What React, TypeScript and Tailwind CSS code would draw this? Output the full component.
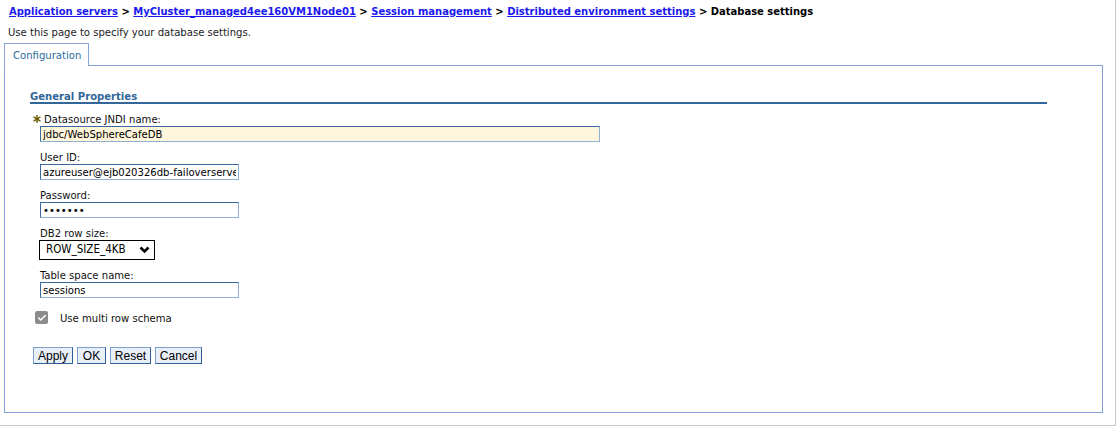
import { Check } from 'lucide-react';

const ui = "font-[family-name:'DejaVu_Sans_Condensed','Liberation_Sans',sans-serif]";

function Field({ label, children, required }: { label: string; children: React.ReactNode; required?: boolean }) {
  return (
    <div className="mt-[10px]">
      <div className={`h-[12px] leading-[12px] text-[11.2px] text-[#111] whitespace-nowrap ${required ? '-ml-[7px]' : ''}`}>
        {required && (
          <svg className="inline-block w-[8px] h-[8px] mr-[3px] align-[0px]" viewBox="0 0 8 8">
            <g stroke="#6b5a00" strokeWidth="1.4" strokeLinecap="round">
              <line x1="4" y1="0.5" x2="4" y2="7.5" />
              <line x1="1" y1="2.2" x2="7" y2="5.8" />
              <line x1="1" y1="5.8" x2="7" y2="2.2" />
            </g>
          </svg>
        )}
        {label}
      </div>
      {children}
    </div>
  );
}

const inputCls =
  'block h-[16px] px-[2px] text-[11.2px] leading-[14px] text-black border border-t-[#3a6a9e] border-l-[#3a6a9e] border-r-[#8fb0d6] border-b-[#8fb0d6] outline-none';

export default function App() {
  const crumbs = [
    'Application servers',
    'MyCluster_managed4ee160VM1Node01',
    'Session management',
    'Distributed environment settings',
  ];

  return (
    <div className={`w-[1120px] h-[437px] bg-white ${ui}`}>
      <div className="w-[1116px] h-[426px] border-r border-b border-[#c8c8c8]">
        {/* breadcrumb */}
        <div className="pl-[9px] pt-[5px] h-[18px] leading-[13px] text-[11.1px] font-bold text-black whitespace-nowrap">
          {crumbs.map((c) => (
            <span key={c}>
              <a href="#" className="text-[#1a1af0] underline">{c}</a>
              {' > '}
            </span>
          ))}
          <span>Database settings</span>
        </div>
        <div className="pl-[8px] mt-[8px] leading-[13px] text-[11.2px] text-[#222]">
          Use this page to specify your database settings.
        </div>

        {/* tab */}
        <div className="ml-[4px] mt-[4px] relative z-10 w-[85px] h-[23px] bg-white border-t border-l border-r border-[#8aa6d6] pl-[8px] pt-[5px] leading-[13px] text-[11.2px] text-[#2a6c9c]">
          Configuration
        </div>

        {/* panel */}
        <div className="ml-[4px] -mt-[1px] w-[1099px] h-[348px] border border-[#7f9fd6]">
          <div className="ml-[25px] pt-[25px] w-[1017px]">
            <div className="h-[13px] leading-[11px] text-[11.2px] font-bold text-[#336699] border-b-2 border-[#336699]">
              General Properties
            </div>
          </div>

          <div className="ml-[35px]">
            <Field label="Datasource JNDI name:" required>
              <input className={`${inputCls} w-[560px] bg-[#fff6dc]`} defaultValue="jdbc/WebSphereCafeDB" />
            </Field>
            <Field label="User ID:">
              <input className={`${inputCls} w-[199px] bg-white`} defaultValue="azureuser@ejb020326db-failoverserver" />
            </Field>
            <Field label="Password:">
              <input type="password" className={`${inputCls} w-[199px] bg-white`} defaultValue="passwrd" />
            </Field>
            <Field label="DB2 row size:">
              <div className="relative w-[116px] h-[20px] -ml-[1px]">
                <select className="block appearance-none w-full h-full border border-black bg-white pl-[6px] text-[11.5px] text-black outline-none rounded-none">
                  <option>ROW_SIZE_4KB</option>
                </select>
                <svg className="absolute right-[5px] top-[6px] w-[11px] h-[8px] pointer-events-none" viewBox="0 0 11 8">
                  <path d="M1.5 1.5 L5.5 5.5 L9.5 1.5" fill="none" stroke="#000" strokeWidth="2.6" />
                </svg>
              </div>
            </Field>
            <Field label="Table space name:">
              <input className={`${inputCls} w-[199px] bg-white`} defaultValue="sessions" />
            </Field>

            <div className="mt-[13px] -ml-[5px] flex items-center h-[13px]">
              <span className="w-[13px] h-[13px] rounded-[2px] bg-[#8c8c8c] flex items-center justify-center">
                <Check className="w-[10px] h-[10px] text-white" strokeWidth={3.5} />
              </span>
              <span className="ml-[12px] mt-[4px] text-[11.2px] text-[#111]">Use multi row schema</span>
            </div>

            <div className="mt-[23px] -ml-[7px] flex gap-[4px] font-[family-name:'Liberation_Sans',Arial,sans-serif] text-[12px] text-black">
              {[
                ['Apply', 'w-[40px]'],
                ['OK', 'w-[29px]'],
                ['Reset', 'w-[41px]'],
                ['Cancel', 'w-[47px]'],
              ].map(([t, w]) => (
                <button
                  key={t}
                  className={`${w} h-[17px] leading-[14px] bg-[#e9eff8] border border-[#7d9fcb] border-r-[#2f5f99] border-b-[#2f5f99]`}
                >
                  {t}
                </button>
              ))}
            </div>
          </div>
        </div>
      </div>
    </div>
  );
}
